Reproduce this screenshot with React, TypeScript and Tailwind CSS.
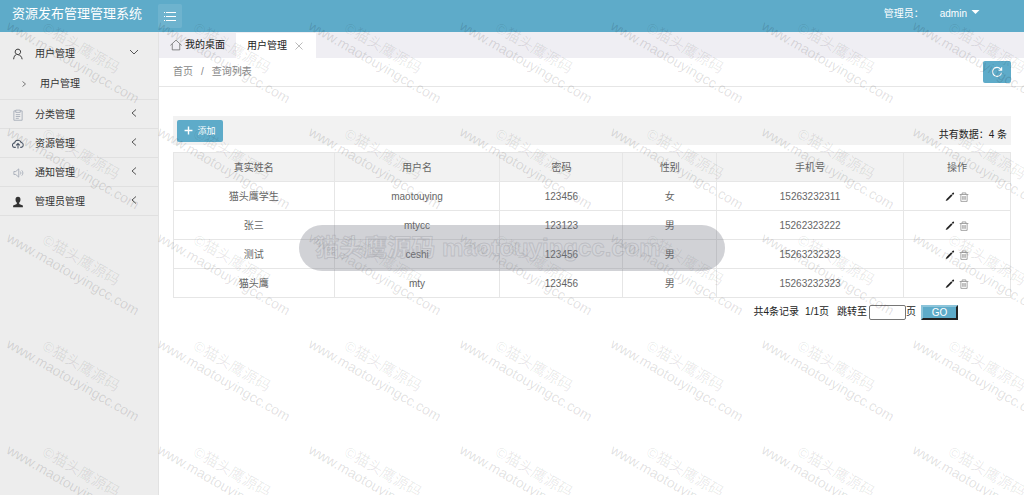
import type { ReactNode } from "react";

const users = [
  { name: "猫头鹰学生", account: "maotouying", password: "123456", sex: "女", phone: "15263232311" },
  { name: "张三", account: "mtycc", password: "123123", sex: "男", phone: "15262323222" },
  { name: "测试", account: "ceshi", password: "123456", sex: "男", phone: "15263232323" },
  { name: "猫头鹰", account: "mty", password: "123456", sex: "男", phone: "15263232323" },
];

function Icon({ className, children }: { className: string; children: ReactNode }) {
  return (
    <svg viewBox="0 0 16 16" fill="none" stroke="currentColor" className={className} aria-hidden="true">
      {children}
    </svg>
  );
}

const menus = [
  {
    title: "分类管理",
    icon: (
      <Icon className="size-3 text-gray-400">
        <path d="M5 2.500H2.500V15h11V2.500H11M5 1.500h6v3H5zM5 7.500h6M5 10h6M5 12.500h4" />
      </Icon>
    ),
  },
  {
    title: "资源管理",
    icon: (
      <Icon className="size-3 text-gray-600">
        <path strokeWidth="1.4" d="M5 12.500H3.800a3 3 0 0 1-.3-6A4.600 4.600 0 0 1 12.300 6a3.300 3.300 0 0 1 0 6.500H11M8 14V7.500M5.500 9.800 8 7.300l2.500 2.500" />
      </Icon>
    ),
  },
  {
    title: "通知管理",
    icon: (
      <Icon className="size-3 text-gray-400">
        <path d="M2.500 6H5l4-3.500v11L5 10H2.500zM11 6c1 1 1 3 0 4M13 4.500c2 2 2 5 0 7" />
      </Icon>
    ),
  },
  {
    title: "管理员管理",
    icon: (
      <Icon className="size-3 text-[#333]">
        <path fill="currentColor" stroke="none" d="M8 1C5.800 1 4.500 2.700 4.700 5c.1 1.700.8 3 1.700 3.900v1.600L1.500 12.500V15h13v-2.500l-4.900-2V8.900c.9-.9 1.600-2.200 1.700-3.900C11.500 2.700 10.200 1 8 1z" />
      </Icon>
    ),
  },
];

function Header() {
  return (
    <header className="flex h-8 items-center bg-[#5eabc9] text-white">
      <h1 className="w-[158px] pb-1 pl-3 text-[13px] leading-5">资源发布管理管理系统</h1>
      <button aria-label="菜单" className="flex h-6 w-6 items-center justify-center rounded-xs bg-white/10">
        <Icon className="size-4">
          <path d="M2 4.500h1M4 4.500h10M2 8.500h1M4 8.500h10M2 12.500h1M4 12.500h10" />
        </Icon>
      </button>
      <div className="ml-auto flex items-center pr-11 pb-1 text-[10px] leading-4">
        <span className="mr-4">管理员：</span>
        <button className="flex items-center gap-1">
          admin
          <svg viewBox="0 0 8 4" className="mb-1 h-1 w-[9px] fill-white" aria-hidden="true">
            <path d="M0 0h8L4 4z" />
          </svg>
        </button>
      </div>
    </header>
  );
}

function Sidebar() {
  return (
    <nav className="w-[159px] shrink-0 border-r border-[#e2e2e2] bg-[#ededed] pt-[7px] text-[#333]">
      <button className="flex h-[29px] w-full items-center pr-5 pl-3">
        <Icon className="size-3 text-[#333]">
          <path strokeWidth="1.3" d="M8 1.500a3.600 3.600 0 0 1 2 6.500L8.500 9M8 1.500A3.600 3.600 0 0 0 6 8.200L8.500 9c2.500.5 4.500 2.500 5 6M6 8.500c-2.200 1-3.600 3.200-3.800 6.500" />
        </Icon>
        <span className="ml-[11px]">用户管理</span>
        <Icon className="mb-1 ml-auto size-2 text-[#555]">
          <path strokeWidth="2" d="M0 4l8 8 8-8" />
        </Icon>
      </button>
      <a href="#" className="flex h-[31px] items-center pl-5">
        <Icon className="size-2 text-[#777]">
          <path strokeWidth="2" d="M5 3l6 5-6 5" />
        </Icon>
        <span className="ml-3">用户管理</span>
      </a>
      {menus.map((m) => (
        <button key={m.title} className="flex h-[29px] w-full items-center border-t border-[#e0e0e0] pt-[2px] pr-5 pl-3 last:h-[30px] last:border-b">
          {m.icon}
          <span className="ml-[11px]">{m.title}</span>
          <Icon className="mb-1 ml-auto size-2 text-[#555]">
            <path strokeWidth="2" d="M12 1L4 8l8 7" />
          </Icon>
        </button>
      ))}
    </nav>
  );
}

function Tabs() {
  return (
    <div className="flex h-[26px] items-stretch bg-[#efeef3] text-[#222]">
      <button className="flex items-center gap-[3px] px-[11px]">
        <Icon className="size-3 text-[#666]">
          <path d="M.5 8.500L8 1.500l7.500 7M3 6.500v8h10v-8" />
        </Icon>
        我的桌面
      </button>
      <div className="mt-px flex items-center gap-2 bg-white pr-[13px] pl-[11px]">
        用户管理
        <button aria-label="关闭">
          <Icon className="size-2 text-[#bbb]">
            <path strokeWidth="2" d="M1 1l14 14M15 1L1 15" />
          </Icon>
        </button>
      </div>
    </div>
  );
}

function UserTable() {
  return (
    <table className="mt-[7px] w-full table-fixed border-collapse text-center text-[#666] [&_td]:h-[29px] [&_td]:border [&_td]:border-[#e6e6e6] [&_td]:pt-[2px] [&_th]:h-[29px] [&_th]:border [&_th]:border-[#e6e6e6] [&_th]:pt-[2px] [&_th]:font-normal">
      <colgroup>
        <col className="w-[19.2%]" />
        <col className="w-[19.8%]" />
        <col className="w-[14.7%]" />
        <col className="w-[11.2%]" />
        <col className="w-[22.3%]" />
        <col />
      </colgroup>
      <thead className="bg-[#f2f2f2]">
        <tr>
          <th>真实姓名</th>
          <th>用户名</th>
          <th>密码</th>
          <th>性别</th>
          <th>手机号</th>
          <th>操作</th>
        </tr>
      </thead>
      <tbody>
        {users.map((u) => (
          <tr key={u.name}>
            <td>{u.name}</td>
            <td>{u.account}</td>
            <td>{u.password}</td>
            <td>{u.sex}</td>
            <td>{u.phone}</td>
            <td>
              <div className="flex items-center justify-center gap-1">
                <button aria-label="编辑">
                  <Icon className="size-[10px] text-[#222]">
                    <path fill="currentColor" stroke="none" d="M1 14.500l1.500-3.500L10 3.500l2 2L4.500 13zM10.800 2.800L12.500 1.200c.5-.4 1-.4 1.400 0l.4.500c.4.400.4.900 0 1.300l-1.600 1.700z" />
                  </Icon>
                </button>
                <button aria-label="删除">
                  <Icon className="size-[10px] text-[#999]">
                    <path strokeWidth="1.400" d="M1 4h14M5 4V1.500h6V4M3 4v11h10V4M6 6.500v6M8 6.500v6M10 6.500v6" />
                  </Icon>
                </button>
              </div>
            </td>
          </tr>
        ))}
      </tbody>
    </table>
  );
}

function Pager() {
  return (
    <form className="mt-[6px] mr-[53px] flex h-4 items-center justify-end text-[#222]">
      <span>共4条记录</span>
      <span className="ml-[6px]">1/1页</span>
      <label htmlFor="page" className="ml-2">跳转至</label>
      <input id="page" className="ml-[2px] h-[15px] w-[37px] rounded-xs border border-[#767676] bg-white px-1" />
      <span>页</span>
      <button type="button" className="ml-[5px] h-[15px] w-[37px] border-2 border-t-[#8cc4da] border-r-[#222] border-b-[#222] border-l-[#8cc4da] bg-[#5eabc9] leading-[11px] text-white">GO</button>
    </form>
  );
}

function Watermark() {
  return (
    <div className="pointer-events-none absolute inset-0 overflow-hidden" aria-hidden="true">
      <div className="grid auto-rows-[106px] grid-cols-[repeat(7,151px)] pt-[2px] pl-[2px]">
        {Array.from({ length: 35 }, (_, i) => (
          <div key={i} className="flex items-center justify-center">
            <div className="rotate-[30deg] text-center text-[14px] leading-4 whitespace-nowrap">
              <p className="text-[15px] text-black/9">©猫头鹰源码</p>
              <p className="text-black/12">www.maotouyingcc.com</p>
            </div>
          </div>
        ))}
      </div>
      <div className="absolute inset-0 flex items-center justify-center">
        <div className="rounded-full bg-[#70727f]/32 pr-16 pl-4 text-2xl leading-[46px] font-bold whitespace-nowrap text-white/5 [-webkit-text-stroke:1px_rgba(110,112,120,0.22)]">
          猫头鹰源码 maotouyingcc.com
        </div>
      </div>
    </div>
  );
}

export default function App() {
  return (
    <div className="relative flex min-h-screen flex-col overflow-hidden bg-white font-['Liberation_Sans','Noto_Sans_CJK_SC',sans-serif] text-[10px] leading-4">
      <Header />
      <div className="flex flex-1">
        <Sidebar />
        <main className="min-w-0 flex-1">
          <Tabs />
          <div className="flex h-[29px] items-center border-b border-[#e6e6e6] pr-[13px] pl-[14px] text-[#888]">
            <a href="#">首页</a>
            <span className="mx-2">/</span>
            <span>查询列表</span>
            <button aria-label="刷新" className="ml-auto flex h-[22px] w-7 items-center justify-center rounded-xs bg-[#5eabc9] text-white">
              <Icon className="size-3">
                <path strokeWidth="1.500" d="M14 9a6 6 0 1 1-1.500-5.200L14 5.500M14.200 1.500v4.200H10" />
              </Icon>
            </button>
          </div>
          <div className="pt-[29px] pr-[13px] pl-[14px]">
            <div className="flex h-[29px] items-center bg-[#f2f2f2] px-1">
              <button className="flex h-[22px] w-[46px] items-center justify-center gap-1 rounded-xs bg-[#5eabc9] text-[9px] text-white">
                <Icon className="size-[9px]">
                  <path strokeWidth="2.500" d="M8 1v14M1 8h14" />
                </Icon>
                添加
              </button>
              <span className="mt-2 ml-auto text-[#222]">共有数据：4 条</span>
            </div>
            <UserTable />
            <Pager />
          </div>
        </main>
      </div>
      <Watermark />
    </div>
  );
}
